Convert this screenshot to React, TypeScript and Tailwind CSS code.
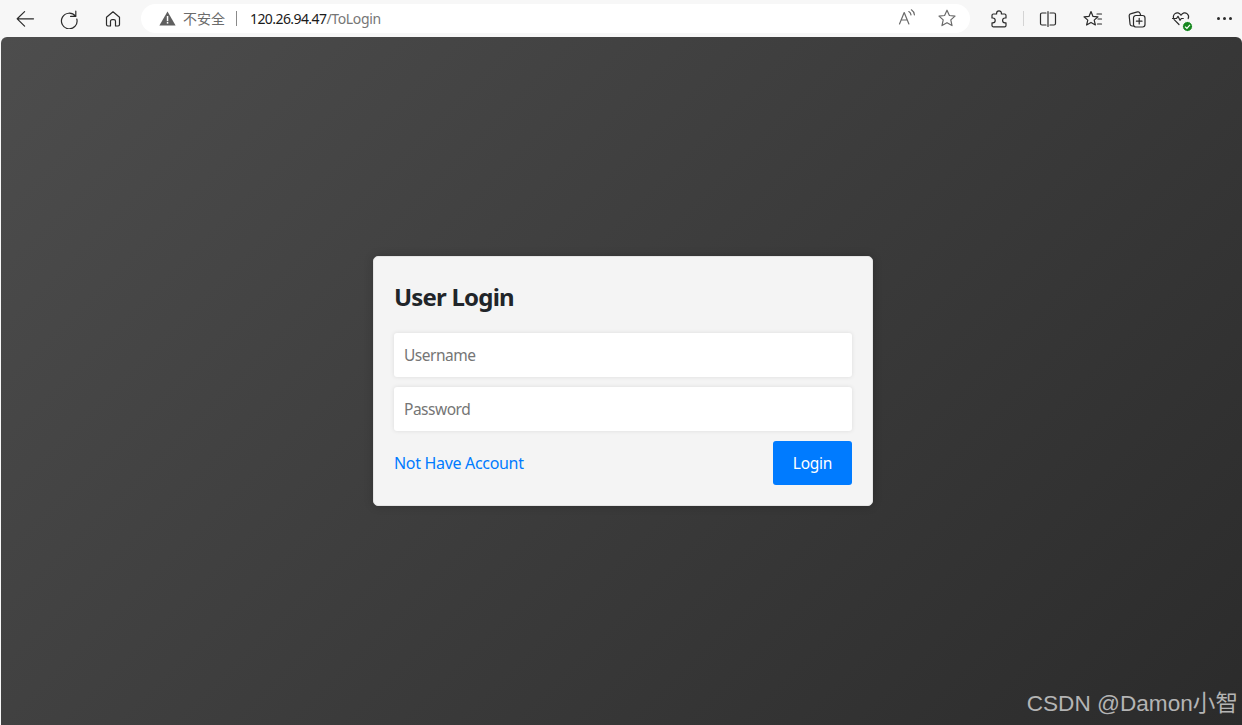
import React from "react";

const S = ({ children, w = 20, h = 20, vb = "0 0 20 20", c = "#2b2b2b", sw = 1.2 }: any) => (
  <svg width={w} height={h} viewBox={vb} fill="none" stroke={c} strokeWidth={sw} strokeLinecap="round" strokeLinejoin="round">
    {children}
  </svg>
);

export default function App() {
  return (
    <div className="relative h-[725px] w-[1242px] overflow-hidden flex flex-col bg-[#f7f7f7] font-['Noto_Sans','Open_Sans','Noto_Sans_CJK_SC',sans-serif]">
      <header className="h-[37px] shrink-0 flex items-center pl-[15px] pr-[8px]">
        <div className="w-[20px] h-[20px] flex items-center justify-center">
          <S><path d="M18.5 9.8H2.2M9.6 2.6 2.2 9.8l7.4 7.4" /></S>
        </div>
        <div className="ml-[24px] w-[20px] h-[20px]">
          <S><path d="M16.8 2.2v5.2h-5.2M16.4 7.2A7.8 7.8 0 1 0 17.8 10" /></S>
        </div>
        <div className="ml-[24px] w-[20px] h-[20px]">
          <S><path d="M3.5 8.2 10 2.8l6.5 5.4v7.4a1.4 1.4 0 0 1-1.4 1.4H12.5v-4.8a1.6 1.6 0 0 0-1.6-1.6H9.1a1.6 1.6 0 0 0-1.6 1.6V17H4.9a1.4 1.4 0 0 1-1.4-1.4z" /></S>
        </div>
        <div className="ml-[18px] w-[831px] h-[29px] rounded-full bg-white flex items-center pl-[18px] pr-[13px] mt-[-1px]">
          <svg width="17" height="15" viewBox="0 0 17 15">
            <path d="M8.5 0.5 16.6 14.6H0.4z" fill="#5f5f5f" />
            <rect x="7.8" y="5" width="1.5" height="5.2" fill="#fff" />
            <rect x="7.8" y="11" width="1.5" height="1.6" fill="#fff" />
          </svg>
          <span className="ml-[7px] text-[14px] text-[#6b6b6b] font-['Noto_Sans_CJK_SC',sans-serif]">不安全</span>
          <div className="ml-[11px] w-px h-[15px] bg-[#8a8a8a]" />
          <span className="ml-[13px] text-[14px] tracking-[-0.58px] text-[#1a1a1a]">120.26.94.47</span>
          <span className="text-[14px] tracking-[-0.33px] text-[#767676]">/ToLogin</span>
          <div className="ml-auto flex items-center gap-[20px]">
            <div className="w-[20px] h-[20px] relative">
              <S c="#6a6a6a"><path d="M2.5 16 7.2 4.5l4.7 11.5M4 12h6.4M11.8 3.6a4.4 4.4 0 0 1 2.2 3.2M14.4 1.8a7 7 0 0 1 3 5" /></S>
            </div>
            <S c="#6a6a6a"><path d="m10 2.2 2.4 5.3 5.6.6-4.2 3.8 1.2 5.7-5-2.9-5 2.9 1.2-5.7L2 8.1l5.6-.6z" /></S>
          </div>
        </div>
        <div className="ml-[19px] w-[20px] h-[20px]">
          <S><path d="M7.6 5V4.2a2.4 2.4 0 0 1 4.8 0V5h3.2a1.4 1.4 0 0 1 1.4 1.4V9h-1a2.4 2.4 0 0 0 0 4.8h1v2.6a1.4 1.4 0 0 1-1.4 1.4H4.4A1.4 1.4 0 0 1 3 16.4v-2.6h.8a2.4 2.4 0 0 0 0-4.8H3V6.4A1.4 1.4 0 0 1 4.4 5z" /></S>
        </div>
        <div className="ml-[14px] w-px h-[15px] bg-[#d4d4d4]" />
        <div className="ml-[14px] w-[20px] h-[20px]">
          <S><path d="M8 4H4a1.5 1.5 0 0 0-1.5 1.5v9A1.5 1.5 0 0 0 4 16h4M12 4h4a1.5 1.5 0 0 1 1.5 1.5v9A1.5 1.5 0 0 1 16 16h-4M10 2.5v15" /></S>
        </div>
        <div className="ml-[25px] w-[20px] h-[20px]">
          <S><path d="M8 2.5 10 7.4l5 .4-3.8 3.3 1.2 4.9L8 13.4l-4.4 2.6 1.2-4.9L1 7.8l5-.4zM14 5h4.5M15 10h3.5M14.5 15h4" /></S>
        </div>
        <div className="ml-[24px] w-[20px] h-[20px]">
          <S><path d="M6.5 17H5.2A2.2 2.2 0 0 1 3 14.8L2.2 7A2.2 2.2 0 0 1 4.2 4.6l6.3-1.7a2 2 0 0 1 2.4 1.2L13.6 6" /><rect x="6.5" y="6.5" width="11.5" height="11.5" rx="2.4" /><path d="M12.2 9.4v5.6M9.4 12.2h5.6" /></S>
        </div>
        <div className="ml-[24px] relative w-[20px] h-[20px]">
          <S><path d="M10 6.2c-1.6-2.6-4.2-3-6-1.6-2 1.5-2.2 4.4-.6 6.2L8 15.5M10 6.2c1.6-2.6 4.2-3 6-1.6 1.5 1.2 2 3.2 1.2 5M1.5 9.5h4l1.5-2.2 2 4 1.3-1.8h2" /></S>
          <div className="absolute right-[-2px] bottom-[-3px] w-[11px] h-[11px] rounded-full bg-[#16871f] border border-white flex items-center justify-center">
            <svg width="7" height="7" viewBox="0 0 7 7" fill="none" stroke="#fff" strokeWidth="1.2"><path d="M1 3.6 2.9 5.3 6 1.8" /></svg>
          </div>
        </div>
        <div className="ml-[23px] w-[20px] h-[20px] flex items-center justify-center gap-[3px]">
          <span className="w-[3px] h-[3px] rounded-full bg-[#2b2b2b]" />
          <span className="w-[3px] h-[3px] rounded-full bg-[#2b2b2b]" />
          <span className="w-[3px] h-[3px] rounded-full bg-[#2b2b2b]" />
        </div>
      </header>

      <main className="flex-1 ml-px rounded-t-[6px] pl-[3px] flex items-center justify-center bg-[linear-gradient(135deg,#4d4d4d,#2b2b2b)]">
        <div className="w-[500px] h-[250px] rounded-[5px] border border-[#e4e4e4] bg-[#f4f4f4] p-[20px] flex flex-col shadow-[0_0_10px_rgba(0,0,0,0.2)]">
          <h1 className="text-[24px] leading-[29px] mt-[5px] mb-[22px] font-bold text-[#212529] tracking-[-0.8px]">User Login</h1>
          <div className="h-[44px] rounded-[3px] bg-white flex items-center pl-[10px] pt-[2px] text-[15.5px] tracking-[-0.48px] text-[#757575] shadow-[0_0_4px_rgba(0,0,0,0.1)]">Username</div>
          <div className="h-[44px] mt-[10px] rounded-[3px] bg-white flex items-center pl-[10px] pt-[2px] text-[15.5px] tracking-[-0.48px] text-[#757575] shadow-[0_0_4px_rgba(0,0,0,0.1)]">Password</div>
          <div className="mt-[10px] flex items-center justify-between">
            <a className="text-[16px] tracking-[-0.32px] text-[#007bff]">Not Have Account</a>
            <button className="w-[79px] h-[44px] rounded-[3px] bg-[#007bff] pt-[2px] text-white text-[15.5px] tracking-[-0.25px]">Login</button>
          </div>
        </div>
      </main>

      <div className="absolute right-[4px] bottom-[3px] text-[22.6px] leading-[36px] text-[#b4b4b4] font-['Liberation_Sans','Noto_Sans_CJK_SC',sans-serif]">CSDN @Damon小智</div>
    </div>
  );
}
